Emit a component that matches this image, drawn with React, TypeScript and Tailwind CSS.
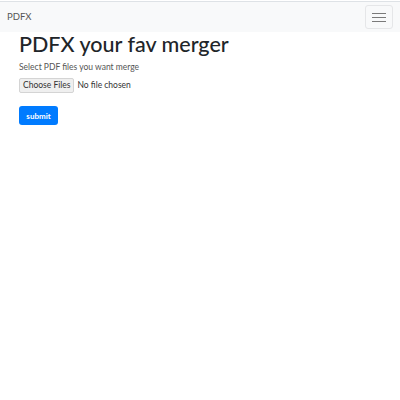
import React from 'react';

const App: React.FC = () => {
  return (
    <div className="min-h-[400px] bg-white text-[#212529] font-['Lato',sans-serif]">
      <nav className="mt-px border-t border-[#dee2e6] bg-[#f8f9fa] h-[31px] flex items-center justify-between pl-[7px] pr-[7px]">
        <span className="text-[9.5px] text-[#555]">PDFX</span>
        <button className="w-[28px] h-[24px] border border-[#e5e6e8] rounded-[3px] flex flex-col items-center justify-center gap-[3px]">
          <span className="block w-[14px] h-px bg-[#7a7a7a]"></span>
          <span className="block w-[14px] h-px bg-[#7a7a7a]"></span>
          <span className="block w-[14px] h-px bg-[#7a7a7a]"></span>
        </button>
      </nav>

      <div className="pl-[19px]">
        <h1 className="text-[21.5px] leading-[24px] font-medium text-[#212529]">PDFX your fav merger</h1>
        <p className="mt-[6px] text-[8.5px] leading-[10px] text-[#555]">Select PDF files you want merge</p>
        <div className="mt-[6px] flex items-center gap-[3px] text-[8.5px]">
          <span className="h-[15px] px-[3px] flex items-center bg-[#efefef] border border-[#d4d4d4] rounded-[2px] text-[#333]">Choose Files</span>
          <span className="text-[#333]">No file chosen</span>
        </div>
        <button className="mt-[13px] h-[19px] w-[39px] bg-[#007bff] rounded-[3px] text-white text-[8px] font-bold flex items-center justify-center">
          submit
        </button>
      </div>
    </div>
  );
};

export default App;
